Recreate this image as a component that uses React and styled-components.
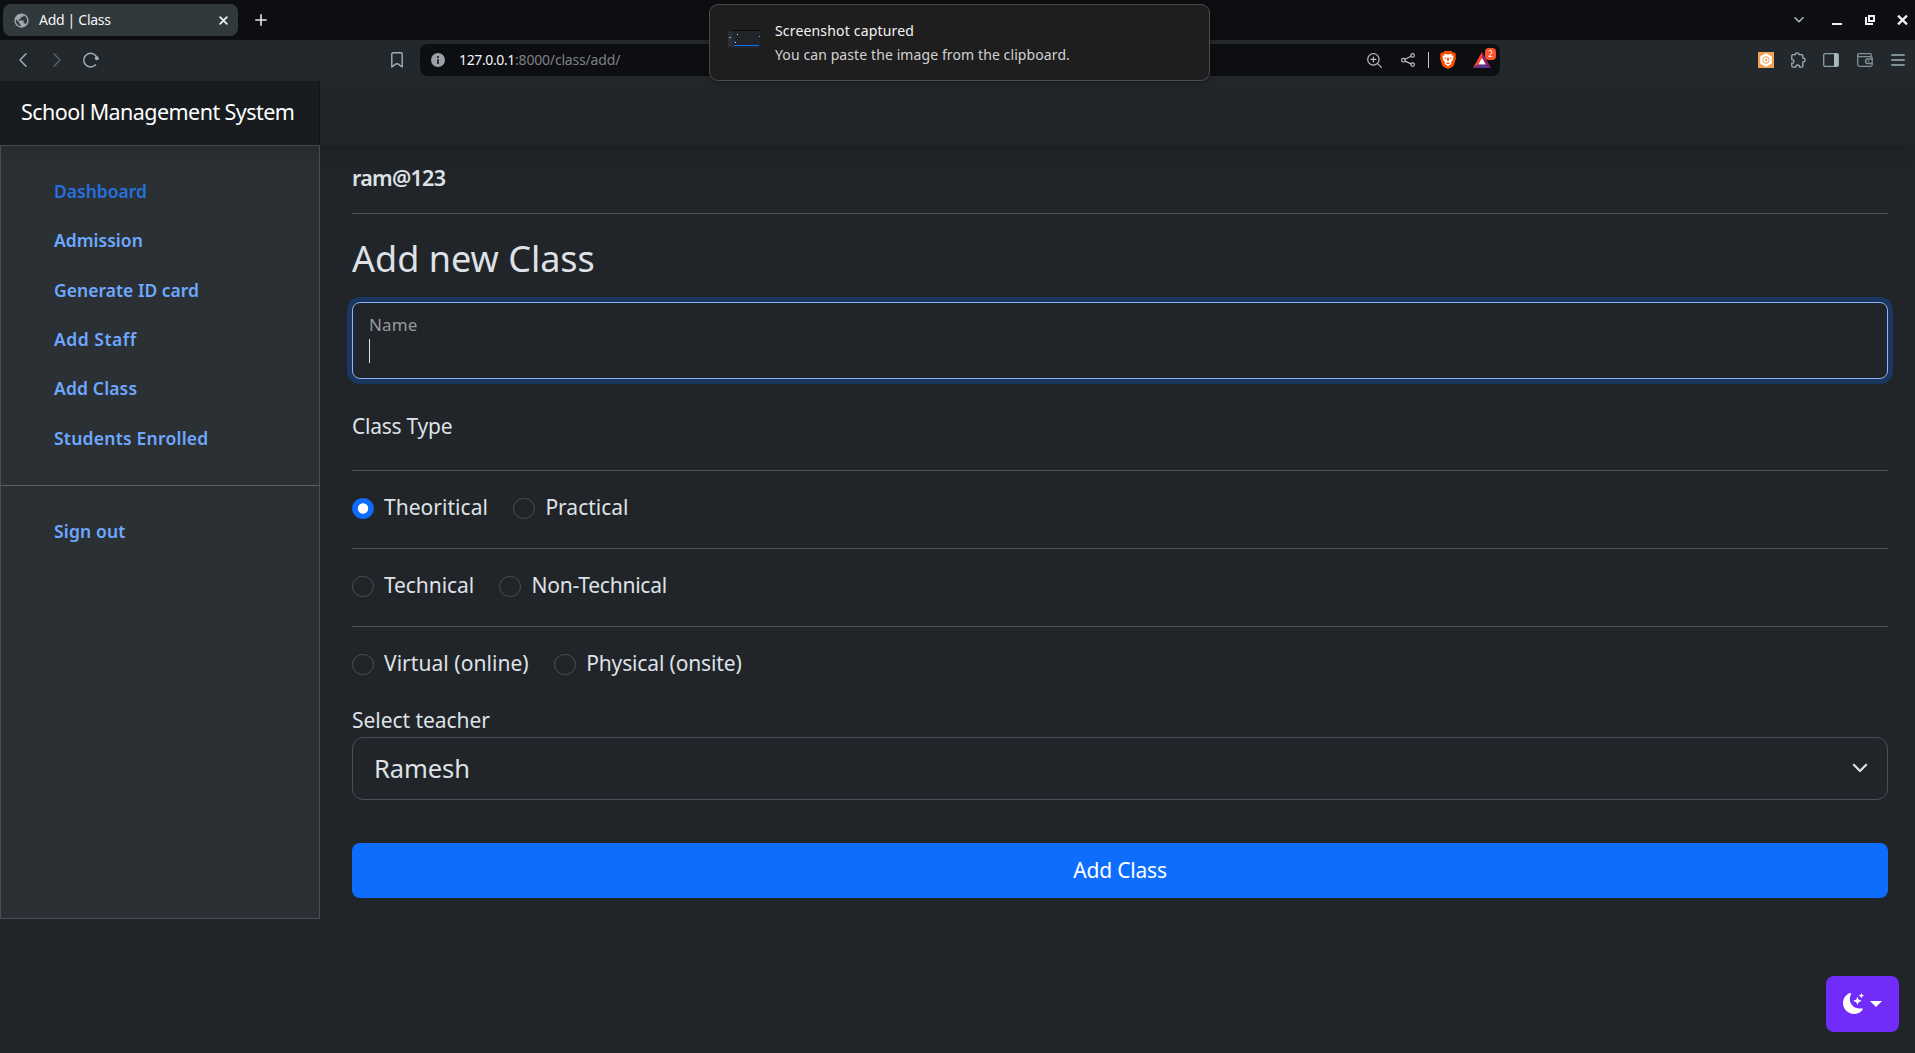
import React from "react";
import styled, { createGlobalStyle, css } from "styled-components";
import { BsMoonStarsFill } from "react-icons/bs";
import { MdPublic } from "react-icons/md";

const GlobalStyle = createGlobalStyle`
  *, *::before, *::after { box-sizing: border-box; }
  body {
    margin: 0;
    background: #212529;
    color: #dee2e6;
    font-family: "Noto Sans", "Open Sans", sans-serif;
    overflow: hidden;
  }
  svg { display: block; flex: none; }
`;

const Page = styled.div`
  height: 1053px;
  position: relative;
  display: flex;
  flex-direction: column;
`;

/* Browser chrome */
const TabStrip = styled.div`
  height: 40px;
  flex: none;
  display: flex;
  align-items: center;
  padding: 0 7px 0 3px;
  background: #0d0e12;
`;

const Tab = styled.div`
  width: 235px;
  height: 32px;
  padding: 0 10px;
  display: flex;
  align-items: center;
  gap: 9px;
  border-radius: 8px;
  background: #31393d;
  color: #f4f5f6;
`;

const TabTitle = styled.span`
  flex: 1;
  font-size: 14px;
  line-height: 20px;
  letter-spacing: -0.3px;
`;

const NewTab = styled.div`
  margin-left: 17px;
`;

const WindowControls = styled.div`
  margin-left: auto;
  display: flex;
  align-items: center;
  gap: 22px;
`;

const TabSearch = styled.div`
  margin-right: 5px;
`;

const Toolbar = styled.div`
  height: 41px;
  flex: none;
  display: flex;
  align-items: center;
  padding: 0 1px 1px 6px;
  background: #22282b;
`;

const IconGroup = styled.div`
  display: flex;
`;

const IconCell = styled.div`
  width: ${(p) => p.$w || 34}px;
  height: 32px;
  display: flex;
  align-items: center;
  justify-content: center;
`;

const AddressGroup = styled.div`
  display: flex;
  gap: 6px;
  margin: 0 auto 0 272px;
`;

const AddressBar = styled.div`
  width: 1080px;
  height: 32px;
  padding: 0 4px 0 11px;
  display: flex;
  align-items: center;
  border-radius: 8px;
  background: #0d0e12;
`;

const Address = styled.div`
  flex: 1;
  margin-left: 14px;
  font-size: 14px;
  line-height: 20px;
  letter-spacing: -0.37px;
  color: #f4f5f6;
`;

const AddressPath = styled.span`
  letter-spacing: -0.18px;
  color: #7e8083;
`;

const AddressActions = styled.div`
  display: flex;
  align-items: center;
`;

const ActionDivider = styled.div`
  width: 1px;
  height: 16px;
  margin: 0 11px 0 3px;
  background: #c6c8ca;
`;

const Rewards = styled.div`
  position: relative;
  width: 23px;
  height: 24px;
  margin-left: 17px;
  padding-top: 4px;
`;

const RewardsBadge = styled.span`
  position: absolute;
  top: 0;
  right: 0;
  width: 11px;
  height: 12px;
  border-radius: 4px;
  background: #fb542b;
  color: #fff;
  font-size: 8px;
  line-height: 12px;
  text-align: center;
`;

/* Desktop notification */
const Notification = styled.div`
  position: absolute;
  top: 4px;
  left: 709px;
  width: 501px;
  height: 77px;
  padding: 0 18px;
  display: flex;
  align-items: center;
  gap: 15px;
  border: 1px solid #4b4b4b;
  border-radius: 9px;
  background: #1e1e1e;
  box-shadow: 0 1px 5px rgba(0, 0, 0, 0.35);
  z-index: 5;
`;

const Thumbnail = styled.svg`
  width: 32px;
  height: 18px;
  margin-bottom: 7px;
`;

const NotificationText = styled.div`
  display: flex;
  flex-direction: column;
  padding-top: 1px;
`;

const NotificationLine = styled.span`
  font-size: 14px;
  line-height: 24px;
  letter-spacing: ${(p) => p.$ls}px;
  color: ${(p) => (p.$strong ? "#f3f3f3" : "#d2d2d2")};
`;

/* Application */
const Header = styled.header`
  height: 64px;
  flex: none;
  display: flex;
  position: relative;
  z-index: 1;
  background: #22252a;
  box-shadow: 0 8px 16px rgba(0, 0, 0, 0.15);
`;

const Brand = styled.div`
  width: 320px;
  padding: 0 0 3px 21px;
  display: flex;
  align-items: center;
  background: #191c1f;
  box-shadow: inset -1px 0 0 rgba(0, 0, 0, 0.25);
  color: #fff;
  font-size: 21.5px;
  letter-spacing: -0.56px;
  white-space: nowrap;
`;

const Body = styled.div`
  display: flex;
  align-items: flex-start;
`;

const Sidebar = styled.nav`
  width: 320px;
  height: 774px;
  padding-top: 20.8px;
  border: 1px solid #495057;
  background: #2b3035;
`;

const NavLink = styled.a`
  display: block;
  height: 49.4px;
  padding-left: 53px;
  font-size: 17.5px;
  font-weight: 600;
  line-height: 49.4px;
  letter-spacing: ${(p) => p.$ls}px;
  white-space: nowrap;
  color: ${(p) => (p.$active ? "#2470dc" : "#6ea8fe")};
`;

const NavDivider = styled.div`
  height: 1px;
  margin: 21.8px 0 21px;
  background: #595e62;
`;

const Main = styled.main`
  flex: 1;
  padding: 16px 27px 0 32px;
  display: flex;
  flex-direction: column;
`;

const UserName = styled.div`
  font-size: 21.5px;
  font-weight: 600;
  line-height: 33px;
  letter-spacing: -0.72px;
`;

const Rule = styled.div`
  height: 1px;
  margin: ${(p) => p.$top}px 0 ${(p) => p.$bottom}px;
  background: #4e5255;
`;

const Title = styled.h2`
  margin: 0 0 22px;
  font-size: 36px;
  font-weight: 400;
  line-height: 42px;
  letter-spacing: 0;
`;

const NameField = styled.div`
  height: 77px;
  padding: 9px 16px;
  border: 1px solid #86b7fe;
  border-radius: 8px;
  box-shadow: 0 0 0 5px #1c375f;
`;

const FieldLabel = styled.div`
  font-size: 17px;
  line-height: 25px;
  letter-spacing: 0.1px;
  color: #96999c;
`;

const Caret = styled.div`
  width: 1px;
  height: 24px;
  margin-top: 2px;
  background: #dee2e6;
`;

const Label = styled.div`
  font-size: 21px;
  line-height: 33px;
  letter-spacing: ${(p) => p.$ls}px;
  margin-top: ${(p) => p.$top}px;
`;

const RadioRow = styled.div`
  height: 33px;
  display: flex;
  align-items: center;
  gap: 25.5px;
`;

const RadioOption = styled.label`
  display: flex;
  align-items: center;
  gap: 10.5px;
  font-size: 21px;
  line-height: 33px;
  letter-spacing: ${(p) => p.$ls}px;
  white-space: nowrap;
`;

const RadioMark = styled.span`
  width: 21.5px;
  height: 21.5px;
  margin-top: 2px;
  border: 1px solid #495057;
  border-radius: 50%;
  ${(p) =>
    p.$checked &&
    css`
      border-color: #0d6efd;
      background: radial-gradient(circle, #fff 4.8px, #0d6efd 5.6px);
    `}
`;

const SelectBox = styled.div`
  height: 63px;
  padding: 0 19px 2px 21px;
  display: flex;
  align-items: center;
  justify-content: space-between;
  border: 1px solid #495057;
  border-radius: 11px;
  font-size: 25.5px;
  letter-spacing: -0.07px;
`;

const SubmitButton = styled.button`
  height: 55px;
  margin-top: 43px;
  padding: 0 0 2px;
  border: 0;
  border-radius: 8px;
  background: #0d6efd;
  color: #fff;
  font-family: inherit;
  font-size: 21px;
  letter-spacing: -0.2px;
`;

const ThemeButton = styled.div`
  position: absolute;
  right: 16px;
  bottom: 21px;
  width: 73px;
  height: 56px;
  padding: 0 0 1px 17px;
  display: flex;
  align-items: center;
  gap: 6px;
  border-radius: 8px;
  background: #712cf9;
  color: #fff;
`;

const DropCaret = styled.span`
  border-top: 6px solid #fff;
  border-left: 6px solid transparent;
  border-right: 6px solid transparent;
`;

const Stroke = ({ w, h, color = "#9fb0b8", sw = 1.3, children }) => (
  <svg width={w} height={h} viewBox={`0 0 ${w} ${h}`} fill="none" stroke={color} strokeWidth={sw} strokeLinecap="round" strokeLinejoin="round">
    {children}
  </svg>
);

const NAV = [
  ["Dashboard", 0, true],
  ["Admission", 0.02],
  ["Generate ID card", 0.02],
  ["Add Staff", 0.52],
  ["Add Class", 0.15],
  ["Students Enrolled", 0.23],
];

const OPTIONS = [
  [["Theoritical", 0.03, true], ["Practical", 0]],
  [["Technical", -0.09], ["Non-Technical", -0.22]],
  [["Virtual (online)", 0.05], ["Physical (onsite)", -0.14]],
];

function BrowserChrome() {
  return (
    <>
      <TabStrip>
        <Tab>
          <MdPublic size={17} color="#a3a7b0" />
          <TabTitle>Add | Class</TabTitle>
          <Stroke w={9} h={9} color="#f4f5f6" sw={1.7}>
            <path d="M1.2 1.2l6.6 6.6M7.8 1.2L1.2 7.8" />
          </Stroke>
        </Tab>
        <NewTab>
          <Stroke w={12} h={12} color="#e4e6e8" sw={1.6}>
            <path d="M6 .8v10.4M.8 6h10.4" />
          </Stroke>
        </NewTab>
        <WindowControls>
          <TabSearch>
            <Stroke w={10} h={6} sw={1.6} color="#a9b8bf">
              <path d="M1 .8l4 4 4-4" />
            </Stroke>
          </TabSearch>
          <svg width="12" height="10" viewBox="0 0 12 10"><path d="M1 8h10v2H1z" fill="#f0f1f2" /></svg>
          <svg width="10" height="10" viewBox="0 0 10 10" fill="none" stroke="#f0f1f2" strokeWidth="2">
            <path d="M4 1h5v5H4zM1 2v7h7" />
          </svg>
          <svg width="11" height="10" viewBox="0 0 11 10" fill="none" stroke="#f0f1f2" strokeWidth="2.3">
            <path d="M1 .6l9 8.8M10 .6L1 9.4" />
          </svg>
        </WindowControls>
      </TabStrip>
      <Toolbar>
        <IconGroup>
          <IconCell>
            <Stroke w={8} h={14} sw={1.5}><path d="M7 .8L1 7l6 6.2" /></Stroke>
          </IconCell>
          <IconCell>
            <Stroke w={8} h={14} sw={1.5} color="#566066"><path d="M1 .8L7 7l-6 6.2" /></Stroke>
          </IconCell>
          <IconCell>
            <Stroke w={16} h={16} sw={1.4}>
              <path d="M14.1 6A6.8 6.8 0 1 0 12.6 12.8" />
              <circle cx="13.8" cy="6.3" r="2" fill="#9fb0b8" stroke="none" />
            </Stroke>
          </IconCell>
        </IconGroup>
        <AddressGroup>
          <IconCell>
            <Stroke w={12} h={16} sw={1.4}>
              <path d="M2 .8h8a1.2 1.2 0 0 1 1.2 1.2v13L8 12.6a3 3 0 0 0-4 0L.8 15V2A1.2 1.2 0 0 1 2 .8z" />
            </Stroke>
          </IconCell>
          <AddressBar>
            <svg width="14" height="14" viewBox="0 0 14 14">
              <circle cx="7" cy="7" r="7" fill="#9c9fa7" />
              <path d="M6 3h2v2H6zM6 6.2h2V11H6z" fill="#303237" />
            </svg>
            <Address>
              127.0.0.1<AddressPath>:8000/class/add/</AddressPath>
            </Address>
            <AddressActions>
              <IconCell>
                <Stroke w={15} h={15} color="#b9bbbe" sw={1.2}>
                  <circle cx="6.4" cy="6.4" r="5.7" />
                  <path d="M10.6 10.6l3.8 3.8M6.4 4v4.8M4 6.4h4.8" />
                </Stroke>
              </IconCell>
              <IconCell>
                <Stroke w={14} h={14} color="#b9bbbe" sw={1.2}>
                  <circle cx="2.4" cy="7.2" r="1.8" />
                  <circle cx="11.6" cy="2.4" r="1.8" />
                  <circle cx="11.6" cy="11.6" r="1.8" />
                  <path d="M4 6.3l6-3.1M4 8.1l6 2.8" />
                </Stroke>
              </IconCell>
              <ActionDivider />
              <svg width="16" height="18" viewBox="0 0 16 18">
                <path d="M4.4 0h7.2l1.5 1.7 1.6-.1L16 3.8l-.6 1.4.6 1.7-2 7.1-1.6 2L8 18l-4.4-2L2 14 0 6.9l.6-1.7L0 3.8l1.3-2.2 1.6.1z" fill="#fb5106" />
                <path d="M5 2.900l3 .5 3-.5 2.600 2.800-.9 2 .3 1.300-2.400 2.500.9 1.200L8 15.200l-3.500-2.500.9-1.200L3 9l.3-1.300-.9-2z" fill="#fff" />
                <path d="M4 6.2l2.500.9-.7 1.200zM12 6.200l-2.500.9.7 1.200zM7.300 6.500h1.400l.4 3L8 10.100l-1.100-.6zM6 12.200l2-1 2 1-2 1.100z" fill="#fb5106" />
              </svg>
              <Rewards>
                <svg width="18" height="16" viewBox="0 0 18 16">
                  <path d="M9 0L0 16l5.200-3.600L9 5.800z" fill="#ff4724" />
                  <path d="M9 0l9 16-5.200-3.600L9 5.800z" fill="#9e1f63" />
                  <path d="M0 16h18l-5.200-3.600H5.200z" fill="#662d91" />
                  <path d="M9 5.800l3.800 6.600H5.200z" fill="#fff" />
                </svg>
                <RewardsBadge>2</RewardsBadge>
              </Rewards>
            </AddressActions>
          </AddressBar>
        </AddressGroup>
        <IconGroup>
          <IconCell $w={33}>
            <svg width="16" height="16" viewBox="0 0 16 16">
              <path d="M0 0h16v16H0z" fill="#f0a255" />
              <path d="M8 1.300l5.800 3.300v6.800L8 14.700l-5.800-3.300V4.600z" fill="#fff" />
              <circle cx="8" cy="8" r="3.300" fill="none" stroke="#f0a255" strokeWidth="1" />
              <circle cx="8" cy="8" r="1.200" fill="#f0a255" />
            </svg>
          </IconCell>
          <IconCell $w={31}>
            <Stroke w={16} h={16} sw={1.3}>
              <path d="M2.800 2.700H5.500C5.300 1.500 6.100.8 7.200.8s1.900.7 1.700 1.900h2.900a1 1 0 0 1 1 1v2.500c1.500-.2 2.400.6 2.400 1.800s-.9 2-2.400 1.800v4.300a1 1 0 0 1-1 1H9.400c.2-1.300-.6-2.200-1.800-2.200s-2 .9-1.800 2.200h-3a1 1 0 0 1-1-1v-3.100c1.300.2 2.100-.5 2.100-1.700s-.8-1.900-2.100-1.700V3.700a1 1 0 0 1 1-1z" />
            </Stroke>
          </IconCell>
          <IconCell $w={35}>
            <Stroke w={16} h={14} sw={1.3} color="#8d9da4">
              <rect x=".7" y=".7" width="14.600" height="12.600" rx="1.300" />
              <path d="M11 .6h3.400q1 0 1 1v10.800q0 1-1 1H11z" fill="#a9b8bf" stroke="none" />
            </Stroke>
          </IconCell>
          <IconCell $w={33}>
            <Stroke w={16} h={14} sw={1.3} color="#81919a">
              <path d="M14.200 4.200V1.700a1 1 0 0 0-1-1H2a1.300 1.300 0 0 0-1.300 1.300v9.500A1.800 1.800 0 0 0 2.500 13.300h11.200a1.500 1.500 0 0 0 1.500-1.500V4.700a1 1 0 0 0-1-1H2.500A1.800 1.800 0 0 1 .8 2.500" />
              <path d="M15 6h-4.300a2.200 2.200 0 0 0 0 4.500H15M11 8.300h.6" />
            </Stroke>
          </IconCell>
          <IconCell $w={33}>
            <Stroke w={14} h={12} sw={1.3}><path d="M.7 1h12.600M.7 6h12.600M.7 11h12.600" /></Stroke>
          </IconCell>
        </IconGroup>
      </Toolbar>
    </>
  );
}

function ScreenshotNotification() {
  return (
    <Notification>
      <Thumbnail viewBox="0 0 32 18">
        <path d="M0 0h32v18H0z" fill="#212529" />
        <path d="M4 0h28v1H4z" fill="#08090b" />
        <path d="M0 2h5v14.500H0z" fill="#2b3035" />
        <path d="M1 7h2v1H1zM31 6h1v1h-1z" fill="#6ea8fe" />
        <path d="M9 4h1v1H9zM7 12h1v1H7z" fill="#dee2e6" />
        <path d="M6 11h1v1H6z" fill="#0d6efd" />
        <path d="M6 15h25v1H6z" fill="#0d6efd" />
      </Thumbnail>
      <NotificationText>
        <NotificationLine $strong $ls={0.17}>Screenshot captured</NotificationLine>
        <NotificationLine $ls={0.1}>You can paste the image from the clipboard.</NotificationLine>
      </NotificationText>
    </Notification>
  );
}

function Radio({ text, ls, checked }) {
  return (
    <RadioOption $ls={ls}>
      <RadioMark $checked={checked} />
      {text}
    </RadioOption>
  );
}

export default function App() {
  return (
    <Page>
      <GlobalStyle />
      <BrowserChrome />
      <ScreenshotNotification />
      <Header>
        <Brand>School Management System</Brand>
      </Header>
      <Body>
        <Sidebar>
          {NAV.map(([text, ls, active]) => (
            <NavLink key={text} $ls={ls} $active={active}>{text}</NavLink>
          ))}
          <NavDivider />
          <NavLink $ls={0.15}>Sign out</NavLink>
        </Sidebar>
        <Main>
          <UserName>ram@123</UserName>
          <Rule $top={19} $bottom={24} />
          <Title>Add new Class</Title>
          <NameField>
            <FieldLabel>Name</FieldLabel>
            <Caret />
          </NameField>
          <Label $top={31} $ls={-0.25}>Class Type</Label>
          {OPTIONS.map((row, i) => (
            <React.Fragment key={i}>
              <Rule $top={i ? 24 : 27} $bottom={20} />
              <RadioRow>
                {row.map(([text, ls, checked]) => (
                  <Radio key={text} text={text} ls={ls} checked={checked} />
                ))}
              </RadioRow>
            </React.Fragment>
          ))}
          <Label $top={24} $ls={-0.05}>Select teacher</Label>
          <SelectBox>
            Ramesh
            <Stroke w={16} h={10} color="#dee2e6" sw={2.2}>
              <path d="M1.800 1.800L8 8l6.200-6.200" />
            </Stroke>
          </SelectBox>
          <SubmitButton>Add Class</SubmitButton>
        </Main>
      </Body>
      <ThemeButton>
        <BsMoonStarsFill size={21} />
        <DropCaret />
      </ThemeButton>
    </Page>
  );
}
